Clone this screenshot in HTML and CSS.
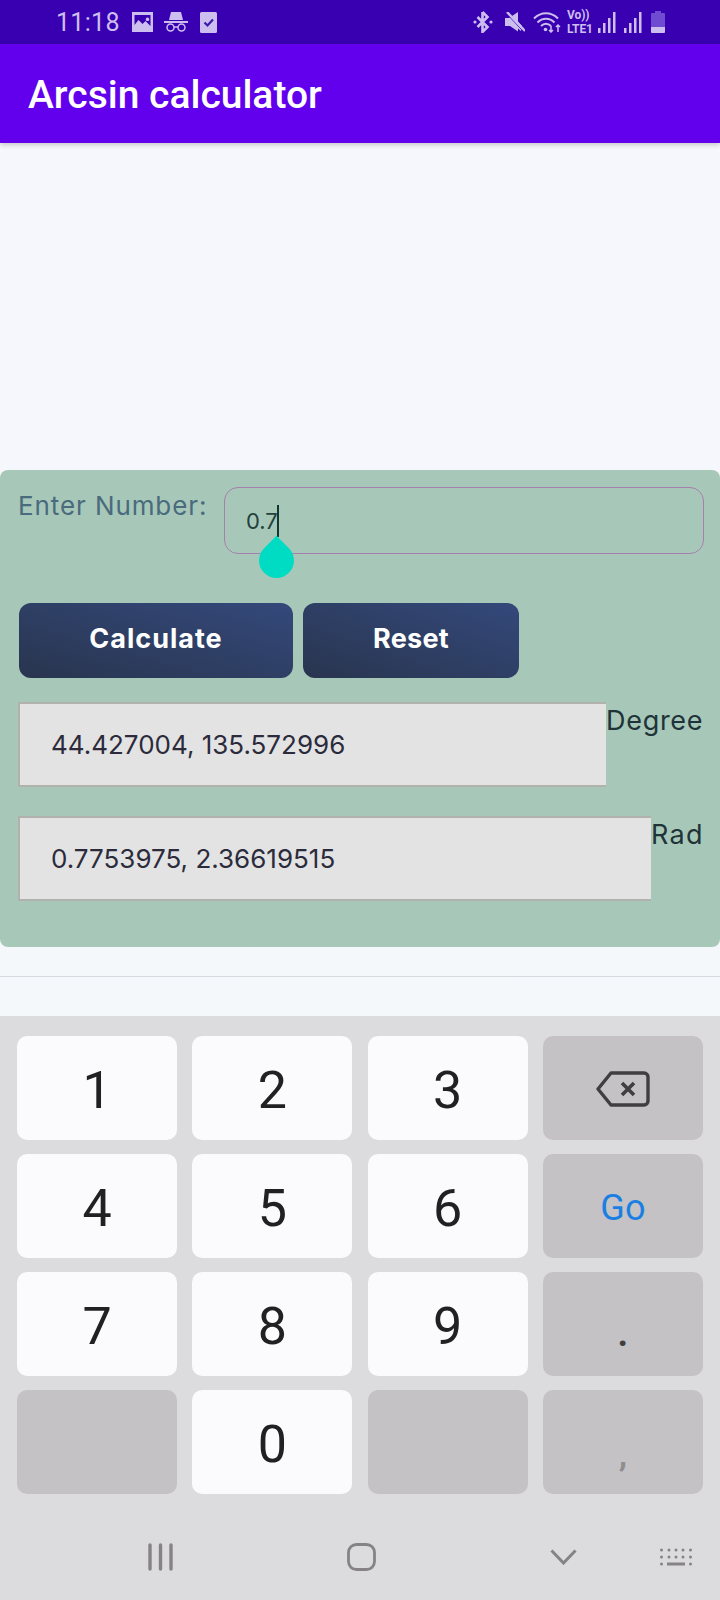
FILE: index.html
```html
<!DOCTYPE html>
<html lang="en">
<head>
<meta charset="utf-8">
<title>Arcsin calculator</title>
<link rel="stylesheet" href="styles.css">
</head>
<body>
<div class="phone">
  <header class="status">
    <span class="time">11:18</span>
    <svg class="si si-img" viewBox="0 0 21 20"><path fill="currentColor" fill-rule="evenodd" d="M0 0h21v20H0zM2.500 3v10l4-5 4 4 3-3 5 5V3zM15.500 5.500a1.800 1.800 0 1 1-.01 0z"/></svg>
    <svg class="si si-inc" viewBox="0 0 24 20"><path fill="currentColor" d="M7 0h10l2 8H5zM0 9h24v2H0z"/><circle cx="6.500" cy="15.500" r="3.500" fill="none" stroke="currentColor" stroke-width="1.500"/><circle cx="17.500" cy="15.500" r="3.500" fill="none" stroke="currentColor" stroke-width="1.500"/><path d="M10 15h4" stroke="currentColor" stroke-width="1.500"/></svg>
    <svg class="si si-chk" viewBox="0 0 17 21"><path fill="currentColor" d="M1.500 0h14A1.500 1.500 0 0 1 17 1.500v18a1.500 1.500 0 0 1-1.500 1.500h-14A1.500 1.500 0 0 1 0 19.500v-18A1.500 1.500 0 0 1 1.500 0z"/><path d="M4.500 10.500l3 3 5.500-6" fill="none" stroke="#3a1aa8" stroke-width="2.200"/></svg>
    <span class="status-right">
      <svg class="si si-bt" viewBox="0 0 20 22"><path d="M9.500 1v20l5-5-10-10M9.500 1l5 5-10 10" fill="none" stroke="currentColor" stroke-width="2.600"/><circle cx="2" cy="11" r="1.600" fill="currentColor"/><circle cx="18" cy="11" r="1.600" fill="currentColor"/></svg>
      <svg class="si si-mute" viewBox="0 0 20 21"><path fill="currentColor" d="M0 6h4l9-6v9.500L17 14l-1 5-3-2.500v3L5 14H0z"/><path d="M1 1l18 19" stroke="#3800b0" stroke-width="1"/><path d="M2 0l18 19" stroke="currentColor" stroke-width="2.400"/></svg>
      <svg class="si si-wifi" viewBox="0 0 28 22"><path d="M1 7.500c7-7 17-7 24 0M4.500 11.500c5-5 12-5 17 0M8 15c3-3 7-3 10 0" fill="none" stroke="currentColor" stroke-width="2"/><circle cx="12.500" cy="18.500" r="1.800" fill="currentColor"/><path d="M18 15v6M16 19l2 2 2-2M25 21v-7M23 16l2-2 2 2" fill="none" stroke="currentColor" stroke-width="1.500"/></svg>
      <span class="volte"><span>Vo))</span><span>LTE1</span></span>
      <svg class="si si-sig" viewBox="0 0 18 21"><path fill="currentColor" d="M0 16h2.500v5H0zM5 11h2.500v10H5zM10 6h2.500v15H10zM15 0h2.500v21H15z"/></svg>
      <svg class="si si-sig si-sig2" viewBox="0 0 18 21"><path fill="currentColor" d="M0 16h2.500v5H0zM5 11h2.500v10H5zM10 6h2.500v15H10zM15 0h2.500v21H15z"/></svg>
      <svg class="si si-bat" viewBox="0 0 14 22"><path fill="#6e4bd0" d="M4 0h6v2h3a1 1 0 0 1 1 1v14H0V3a1 1 0 0 1 1-1h3z"/><path fill="currentColor" d="M0 16h14v5a1 1 0 0 1-1 1H1a1 1 0 0 1-1-1z"/></svg>
    </span>
  </header>
  <div class="appbar">Arcsin calculator</div>

  <main class="content">
    <section class="card">
      <div class="input-row">
        <span class="input-label">Enter Number:</span>
        <div class="input"><span class="input-text">0.7</span><span class="caret"></span><span class="handle"></span></div>
      </div>
      <div class="buttons">
        <div class="btn btn-calc">Calculate</div>
        <div class="btn btn-reset">Reset</div>
      </div>
      <div class="result result-deg">
        <div class="result-box">44.427004, 135.572996</div>
        <span class="result-unit">Degree</span>
      </div>
      <div class="result result-rad">
        <div class="result-box">0.7753975, 2.36619515</div>
        <span class="result-unit">Rad</span>
      </div>
    </section>
    <div class="divider"></div>
  </main>

  <section class="keyboard">
    <div class="keys">
      <div class="key">1</div>
      <div class="key">2</div>
      <div class="key">3</div>
      <div class="key key-fn"><svg class="backspace" viewBox="0 0 54 36"><path d="M15 2h33a4 4 0 0 1 4 4v24a4 4 0 0 1-4 4H15L2 18z" fill="none" stroke="#3f3e41" stroke-width="3.400" stroke-linejoin="round"/><path d="M26 12l12 12M38 12L26 24" stroke="#3f3e41" stroke-width="3.600"/></svg></div>
      <div class="key">4</div>
      <div class="key">5</div>
      <div class="key">6</div>
      <div class="key key-fn key-go">Go</div>
      <div class="key">7</div>
      <div class="key">8</div>
      <div class="key">9</div>
      <div class="key key-fn key-dot">.</div>
      <div class="key key-fn"></div>
      <div class="key">0</div>
      <div class="key key-fn"></div>
      <div class="key key-fn key-comma">,</div>
    </div>
    <nav class="navbar">
      <svg class="nav-recents" viewBox="0 0 25 28"><path d="M2 2v24M12.500 2v24M23 2v24" stroke="#858386" stroke-width="3.400" stroke-linecap="round"/></svg>
      <svg class="nav-home" viewBox="0 0 29 28"><rect x="1.500" y="1.500" width="26" height="25" rx="8" fill="none" stroke="#858386" stroke-width="2.800"/></svg>
      <svg class="nav-back" viewBox="0 0 27 16"><path d="M1.500 1.500L13.500 14 25.500 1.500" fill="none" stroke="#858386" stroke-width="3"/></svg>
      <svg class="nav-kbd" viewBox="0 0 32 18"><g fill="#858386"><circle cx="1.500" cy="2" r="1.500"/><circle cx="9" cy="2" r="1.500"/><circle cx="16" cy="2" r="1.500"/><circle cx="23" cy="2" r="1.500"/><circle cx="30.500" cy="2" r="1.500"/><circle cx="1.500" cy="9" r="1.500"/><circle cx="9" cy="9" r="1.500"/><circle cx="16" cy="9" r="1.500"/><circle cx="23" cy="9" r="1.500"/><circle cx="30.500" cy="9" r="1.500"/><circle cx="1.500" cy="16" r="1.500"/><rect x="7" y="14.500" width="18" height="3"/><circle cx="30.500" cy="16" r="1.500"/></g></svg>
    </nav>
  </section>
</div>
</body>
</html>
```

FILE: styles.css
```css
* { box-sizing: border-box; }
html, body { margin: 0; padding: 0; }
body { background: #f6f7fc; font-family: "Inter", "Liberation Sans", sans-serif; }
.phone { width: 720px; height: 1600px; display: flex; flex-direction: column; overflow: hidden; }

.status { height: 44px; flex: none; background: #3800b0; color: #cdbef0; display: flex; align-items: center; padding-left: 56px; }
.time { font-family: "Roboto", sans-serif; font-size: 25px; line-height: 1; width: 63px; letter-spacing: .3px; padding-top: 1px; }
.si { display: block; flex: none; }
.si-img { width: 21px; height: 20px; margin-left: 13px; }
.si-inc { width: 24px; height: 20px; margin-left: 11px; }
.si-chk { width: 17px; height: 21px; margin-left: 12px; }
.status-right { margin-left: auto; display: flex; align-items: center; padding-right: 55px; }
.si-bt { width: 20px; height: 22px; }
.si-mute { width: 20px; height: 21px; margin-left: 12px; }
.si-wifi { width: 28px; height: 22px; margin-left: 8px; }
.volte { display: flex; flex-direction: column; margin-left: 6px; width: 26px; font-family: "Roboto", sans-serif; font-weight: 700; font-size: 12px; line-height: 14px; letter-spacing: -.1px; white-space: nowrap; }
.si-sig { width: 18px; height: 21px; margin-left: 5px; }
.si-sig2 { margin-left: 8px; }
.si-bat { width: 14px; height: 22px; margin-left: 9px; }

.appbar { height: 99px; flex: none; background: #6200ee; color: #fff; font-family: "Roboto", sans-serif; font-weight: 500; font-size: 39px; line-height: 103px; padding-left: 28px; box-shadow: 0 2px 5px rgba(0,0,0,.2); position: relative; z-index: 1; }

.content { flex: 1; padding-top: 327px; background: linear-gradient(#f6f7fd, #f5f8fb); min-height: 0; }
.card { height: 477px; background: #a7c8b8; border-radius: 8px; padding: 17px 16px 0 18px; }

.input-row { display: flex; align-items: flex-start; }
.input-label { width: 206px; flex: none; font-size: 26px; letter-spacing: .9px; line-height: 38px; color: #4a6a7e; white-space: nowrap; }
.input { flex: 1; height: 67px; border: 1px solid #a77fae; border-radius: 14px; padding-left: 21px; position: relative; display: flex; align-items: center; }
.input-text { font-size: 22px; color: #23403c; }
.caret { width: 2px; height: 32px; background: #123631; margin-left: -1px; }
.handle { position: absolute; left: 34px; top: 55px; width: 35px; height: 35px; background: #00dcc3; border-radius: 0 50% 50% 50%; transform: rotate(45deg); }

.buttons { display: flex; gap: 10px; margin-top: 49px; padding-left: 1px; }
.btn { height: 75px; padding-bottom: 4px; border-radius: 12px; background: linear-gradient(to top right, #29354f, #34497b); color: #fff; font-weight: 700; font-size: 27px; display: flex; align-items: center; justify-content: center; }
.btn-calc { width: 274px; letter-spacing: 1px; }
.btn-reset { width: 216px; letter-spacing: .3px; }

.result { display: flex; align-items: flex-start; height: 85px; }
.result-deg { margin-top: 24px; }
.result-rad { margin-top: 29px; }
.result-box { flex: 1; height: 85px; background: #e3e3e3; border: 2px solid #b1b1ae; border-right: 0; padding-left: 31px; font-size: 26px; line-height: 81px; color: #2b2b3c; }
.result-unit { font-size: 27px; line-height: 38px; color: #1f3338; white-space: nowrap; }
.result-deg .result-unit { width: 98px; letter-spacing: .7px; }
.result-rad .result-unit { width: 53px; letter-spacing: 1.300px; }

.divider { height: 1px; background: #d5dbdf; margin-top: 29px; }

.keyboard { height: 584px; flex: none; background: #dcdbdd; padding: 20px 17px 0; }
.keys { display: grid; grid-template-columns: repeat(4, 160px); grid-auto-rows: 104px; column-gap: 15.300px; row-gap: 14px; }
.key { background: #fbfafd; border-radius: 10px; font-family: "Roboto", sans-serif; font-size: 52px; padding-top: 4px; color: #212124; display: flex; align-items: center; justify-content: center; }
.key-fn { background: #c4c2c5; padding-top: 0; }
.key-go { color: #1a7fe3; font-size: 36px; padding-top: 4px; }
.key-dot { font-size: 42px; font-weight: 500; padding-top: 14px; color: #3f3e41; }
.key-comma { font-size: 34px; font-weight: 700; padding-top: 24px; color: #8f8d90; }
.backspace { width: 54px; height: 36px; margin-top: 2px; }

.navbar { display: flex; align-items: center; padding: 49px 0 0 131px; }
.nav-recents { width: 25px; height: 28px; }
.nav-home { width: 29px; height: 28px; margin-left: 174px; }
.nav-back { width: 27px; height: 16px; margin-left: 174px; }
.nav-kbd { width: 32px; height: 18px; margin-left: 83px; }
```
